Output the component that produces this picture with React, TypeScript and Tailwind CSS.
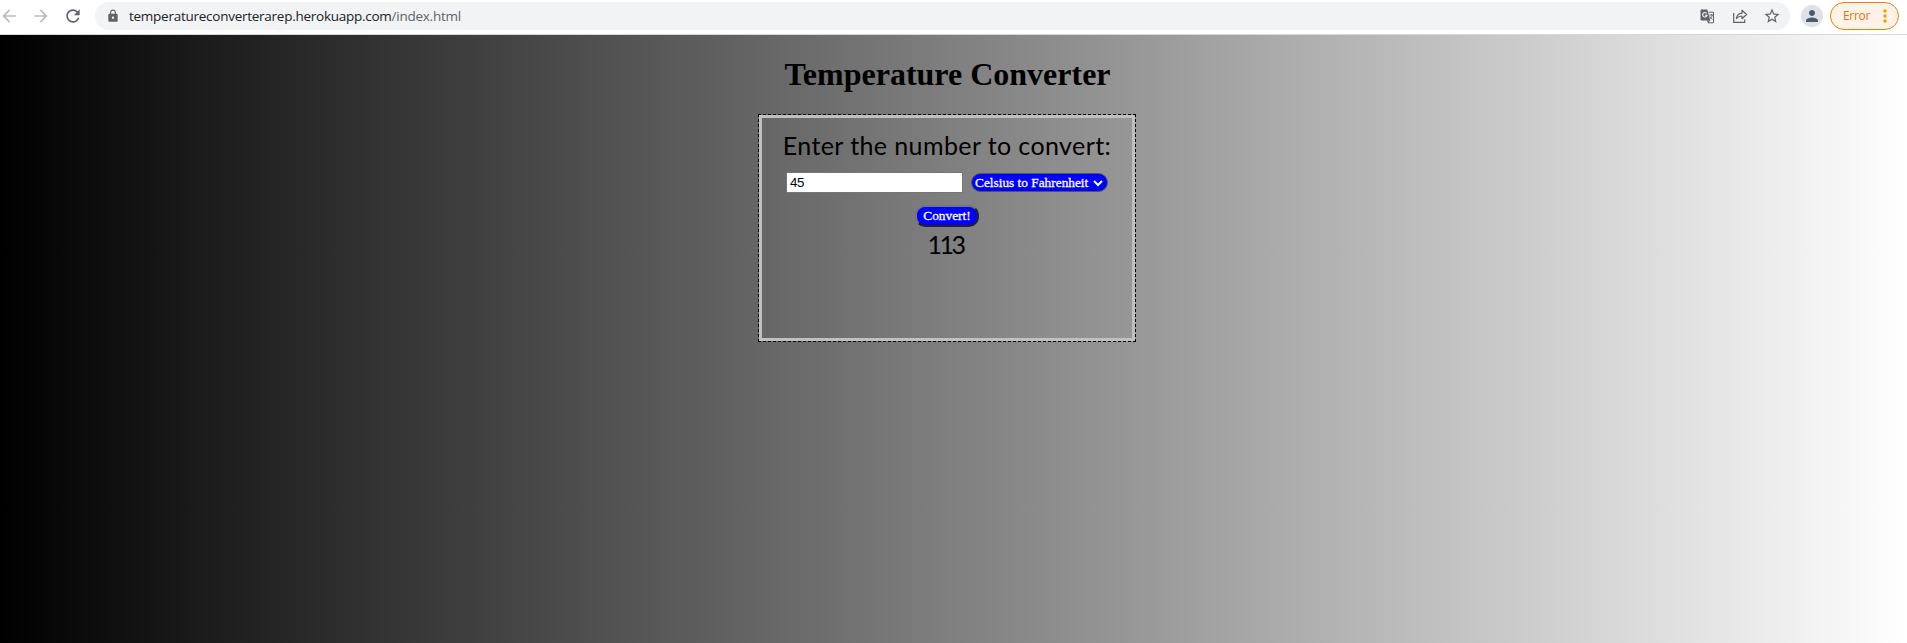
import { MdArrowBack, MdArrowForward, MdRefresh, MdLock, MdStarBorder, MdPerson, MdMoreVert } from 'react-icons/md';

function TranslateIcon() {
  return (
    <svg width="15" height="15" viewBox="0 0 15 15" fill="none">
      <path d="M1 0.500h6.300l3 11H1.500a1 1 0 0 1-1-1V1.500a1 1 0 0 1 .5-1Z" fill="#5f6368" />
      <path d="M6.600 4.400A2.200 2.200 0 1 0 7 6.300H5" stroke="#f1f3f4" strokeWidth="1.100" />
      <path d="M8.500 3.200h5v10.600H8.200l-.8-2.300" stroke="#5f6368" strokeWidth="1" />
      <path d="M9.300 6h3.700M11.300 5v1M12.300 6c-.3 2-1.300 3-2.500 4M10 7.500c.6 1.500 1.500 2.300 2.500 3" stroke="#5f6368" strokeWidth="0.900" />
      <path d="M7.500 11.500h2.800l-2 2.300Z" fill="#5f6368" />
    </svg>
  );
}

function ShareIcon() {
  return (
    <svg width="16" height="16" viewBox="0 0 16 16" fill="none" stroke="#5f6368" strokeWidth="1.2">
      <path d="M1.700 5v9.300h11V11.500" />
      <path d="M4.500 10.500C5 7 7 5.400 10 5.200V2.200L14.600 6.500 10 10.700V8C7.500 8 5.800 8.800 4.500 10.500Z" strokeLinejoin="round" />
    </svg>
  );
}

function BrowserBar() {
  return (
    <header className="flex h-[35px] shrink-0 items-start border-b border-[#d5d7da] bg-white pt-[2px] font-['Open_Sans','Noto_Sans',sans-serif]">
      <div className="flex h-7 w-[95px] shrink-0 items-center text-[#babcbe]">
        <MdArrowBack size={20} className="-ml-px" />
        <MdArrowForward size={20} className="ml-3" />
        <MdRefresh size={20} className="ml-3 text-[#5f6368]" />
      </div>
      <div className="flex h-7 w-[1695px] shrink-0 items-center rounded-full bg-[#f1f3f4] pr-[9px] pl-[11px] text-[#5f6368]">
        <MdLock size={14} />
        <span className="ml-[9px] grow text-[13.5px] leading-7 tracking-[-0.26px] whitespace-nowrap">
          <span className="text-[#202124]">temperatureconverterarep.herokuapp.com</span>/index.html
        </span>
        <TranslateIcon />
        <span className="ml-[17px]"><ShareIcon /></span>
        <MdStarBorder size={18} className="ml-[15px]" />
      </div>
      <div className="mt-[3px] ml-[11px] flex size-[22px] items-center justify-center rounded-full bg-[#dee1e6] text-[#4d5a6e]">
        <MdPerson size={18} />
      </div>
      <div className="ml-[7px] flex h-7 w-[69px] items-center rounded-full border border-[#e8800c] bg-[#fdf3e9] pl-3 text-[12px] tracking-[-0.3px] text-[#e37400]">
        <span className="w-[27px]">Error</span>
        <MdMoreVert size={20} className="ml-[5px] shrink-0 text-[#f29900]" />
      </div>
    </header>
  );
}

export default function App() {
  return (
    <div className="flex h-[643px] flex-col overflow-hidden">
      <BrowserBar />
      <main className="flex grow flex-col items-center bg-[linear-gradient(90deg,#000,#fff)] pr-[13px] font-['Liberation_Serif',serif] text-black">
        <h1 className="mt-[21px] pl-px text-[32px] leading-[37px] font-bold">Temperature Converter</h1>
        <section className="mt-[22px] flex h-[226px] w-[376px] flex-col items-center border-[3px] border-[#c0c0c0] font-['Comic_Sans_MS','Lato',sans-serif] text-[25px] outline-1 outline-black outline-dashed">
          <label htmlFor="num" className="mt-[10px] leading-[35px] tracking-[0.4px] whitespace-nowrap">
            Enter the number to convert:
          </label>
          <div className="mt-[9px] flex items-center">
            <input id="num" defaultValue="45" className="h-[21px] w-[177px] border border-[#767676] bg-white px-[3px] font-['Liberation_Sans',sans-serif] text-[13.33px] tracking-[-0.4px] outline-none" />
            <button className="ml-2 flex h-[19px] w-[137px] items-center rounded-full border border-[#555] bg-[#00f] pl-[3px] font-['Liberation_Serif',serif] text-[13.33px] leading-4 whitespace-nowrap text-white [-webkit-text-stroke:0.3px_white]">
              Celsius to Fahrenheit
              <svg width="10" height="8" viewBox="0 0 10 8" className="ml-[5px]" fill="none" stroke="#fff" strokeWidth="2">
                <path d="M1 2l4 4 4-4" />
              </svg>
            </button>
          </div>
          <button className="mt-3 h-[22px] w-16 rounded-[10px] border-2 border-t-[#767676] border-r-[#222] border-b-[#222] border-l-[#767676] bg-[#00f] font-['Liberation_Serif',serif] text-[13.33px] leading-4 text-white [-webkit-text-stroke:0.3px_white]">
            Convert!
          </button>
          <output className="pr-[3px] leading-[35px] tracking-[-2.5px]">113</output>
        </section>
      </main>
    </div>
  );
}
